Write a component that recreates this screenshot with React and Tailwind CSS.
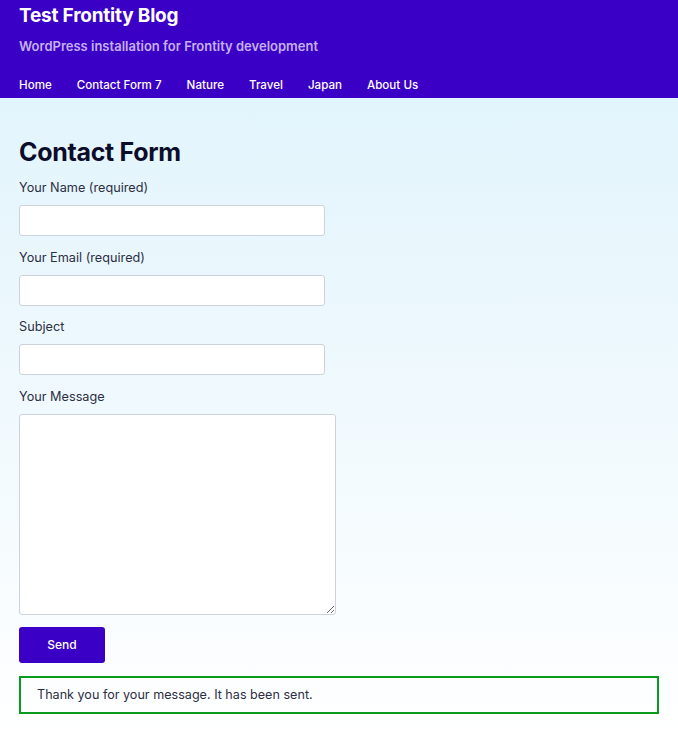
import React from 'react';

const font = { fontFamily: 'Inter, "Noto Sans", "Liberation Sans", sans-serif' };

function Field({ label, children }) {
    return (
        <div className="flex flex-col">
            <label className="text-[12.7px] leading-[16px] text-[#2c2f44] mb-[9px]">{label}</label>
            {children}
        </div>
    );
}

export default function App() {
    const links = ['Home', 'Contact Form 7', 'Nature', 'Travel', 'Japan', 'About Us'];
    return (
        <div className="min-h-[743px] w-full bg-white" style={font}>
            <header className="bg-[#3b00c6] text-white px-[19px] pt-[5px]">
                <h1 className="text-[19px] leading-[22px] font-bold tracking-[-0.2px]">Test Frontity Blog</h1>
                <p className="mt-[11px] text-[13px] leading-[16px] font-semibold text-[#c4b0f1]">
                    WordPress installation for Frontity development
                </p>
                <nav className="mt-[24px] flex gap-[25px] pb-[6px]">
                    {links.map((l) => (
                        <a key={l} className="text-[11.6px] leading-[14px] font-medium text-white">{l}</a>
                    ))}
                </nav>
            </header>
            <main className="bg-gradient-to-b from-[#e2f4fc] to-[#ffffff] px-[19px] pt-[39px] pb-[30px]">
                <h2 className="text-[25px] leading-[30px] font-bold text-[#0c0d2a] tracking-[-0.3px]">Contact Form</h2>
                <div className="mt-[13px] flex flex-col gap-[13.5px]">
                    <Field label="Your Name (required)">
                        <input className="w-[306px] h-[31px] bg-white border border-[#ccd3dc] rounded-[3px]" />
                    </Field>
                    <Field label="Your Email (required)">
                        <input className="w-[306px] h-[31px] bg-white border border-[#ccd3dc] rounded-[3px]" />
                    </Field>
                    <Field label="Subject">
                        <input className="w-[306px] h-[31px] bg-white border border-[#ccd3dc] rounded-[3px]" />
                    </Field>
                    <Field label="Your Message">
                        <textarea className="w-[317px] h-[201px] bg-white border border-[#ccd3dc] rounded-[3px] resize" />
                    </Field>
                </div>
                <button className="block mt-[12px] w-[86px] h-[36px] bg-[#3b00c6] text-white text-[12px] font-medium rounded-[3px]">
                    Send
                </button>
                <div className="mt-[13px] border-2 border-[#0a9a1f] px-[16px] py-[9px] text-[12.6px] leading-[16px] text-[#2c2f44]">
                    Thank you for your message. It has been sent.
                </div>
            </main>
        </div>
    );
}
